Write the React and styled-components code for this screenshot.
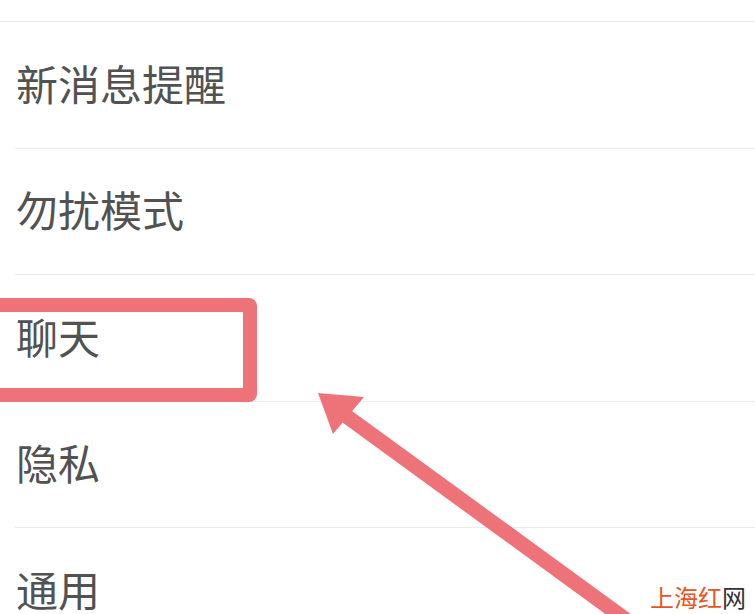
import styled, { createGlobalStyle } from 'styled-components'

const GlobalStyle = createGlobalStyle`
  html, body {
    margin: 0;
    padding: 0;
    background: #ffffff;
  }
  body {
    font-family: "Noto Sans CJK SC", "Noto Sans", sans-serif;
    overflow: hidden;
  }
`

const items = ['新消息提醒', '勿扰模式', '聊天', '隐私', '通用']

export default function App() {
  return (
    <StyledPage>
      <GlobalStyle />
      <StyledTopCell />
      <StyledList>
        {items.map(label => (
          <StyledRow key={label}>
            <StyledLabel>{label}</StyledLabel>
          </StyledRow>
        ))}
      </StyledList>

      {/* annotation overlay: box round 聊天 and the pointing arrow */}
      <StyledHighlight />
      <StyledArrow width="755" height="614" viewBox="0 0 755 614">
        <line x1="338" y1="410" x2="640" y2="630" stroke="#ee7378" strokeWidth="15" />
        <polygon points="318,393 364,397 333,434" fill="#ee7378" />
      </StyledArrow>

      <StyledMark>
        <span>上海红</span>网
      </StyledMark>
    </StyledPage>
  )
}

const StyledPage = styled.div`
  position: relative;
  width: 755px;
  height: 614px;
  overflow: hidden;
  background: #fff;
`

const StyledTopCell = styled.div`
  height: 21px;
  border-bottom: 1px solid #ececec;
`

const StyledList = styled.div`
  display: flex;
  flex-direction: column;
`

const StyledRow = styled.div`
  height: 125.5px;
  margin-left: 15px;
  border-bottom: 1px solid #ececec;
  display: flex;
  align-items: center;
`

const StyledLabel = styled.span`
  font-size: 42px;
  color: #525252;
  line-height: 1;
  padding-left: 1px;
  margin-top: -4px;
`

const StyledHighlight = styled.div`
  position: absolute;
  left: -20px;
  top: 298px;
  width: 277px;
  height: 104px;
  box-sizing: border-box;
  border: 14px solid #ee7378;
  border-radius: 8px;
`

const StyledArrow = styled.svg`
  position: absolute;
  left: 0;
  top: 0;
  pointer-events: none;
`

const StyledMark = styled.div`
  position: absolute;
  right: 9px;
  bottom: 5px;
  font-size: 24px;
  line-height: 1;
  color: #333;
  font-family: "Noto Sans CJK SC", sans-serif;

  span {
    color: #e8561f;
  }
`
